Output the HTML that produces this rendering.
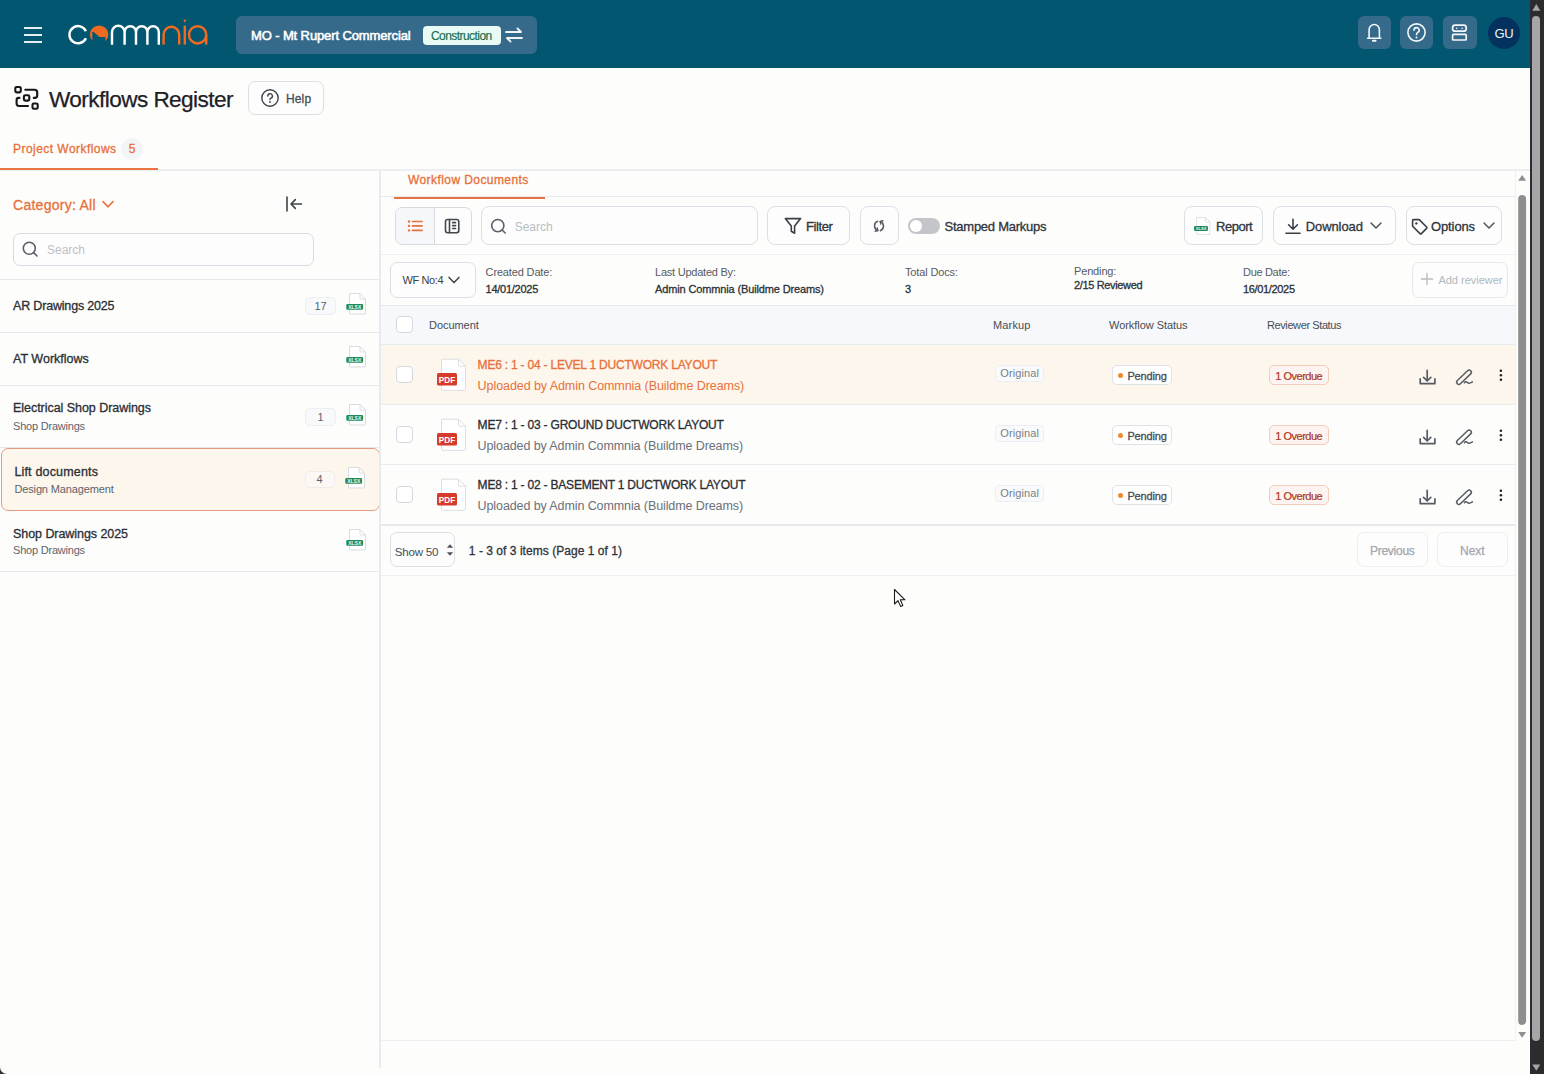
<!DOCTYPE html><html><head><meta charset="utf-8">
<style>
*{box-sizing:border-box;margin:0;padding:0}
html,body{width:1544px;height:1074px;overflow:hidden}
body{position:relative;background:#fdfdfb;font-family:"Liberation Sans",sans-serif;color:#2b2f36}
.a{position:absolute}
.t{position:absolute;white-space:nowrap;line-height:1}
.b{font-weight:700}
.sb{-webkit-text-stroke:0.3px currentColor}
.ln{position:absolute;background:#e8eaee}
svg{position:absolute;overflow:visible}
.btn{position:absolute;border:1px solid #dde0e5;border-radius:7px;background:#fdfdfd}
</style></head><body>

<!-- HEADER -->
<div class="a" style="left:0;top:0;width:1530px;height:68px;background:#03566f"></div>
<!-- hamburger -->
<div class="a" style="left:24px;top:27px;width:18px;height:2px;background:#e4eff4"></div>
<div class="a" style="left:24px;top:34px;width:18px;height:2px;background:#e4eff4"></div>
<div class="a" style="left:24px;top:41px;width:18px;height:2px;background:#e4eff4"></div>
<!-- logo -->
<svg style="left:0;top:0" width="220" height="68" viewBox="0 0 220 68">
  <g fill="none" stroke-width="2.45" stroke-linecap="butt">
    <path d="M85.9 31.2 A8.6 8.6 0 1 0 85.9 38.2" stroke="#fff" stroke-width="2.45"></path>
    <path d="M112 44.8 V32 A6.3 6.3 0 0 1 124.6 32 V44.8 M124.6 32 A5.7 5.7 0 0 1 136 32 V44.8 M136 32 A5.7 5.7 0 0 1 147.4 32 V44.8 M147.4 32 A5.7 5.7 0 0 1 158.8 32 V44.8" stroke="#fff"></path>
    <path d="M163.6 44.6 V34.6 A7.8 7.8 0 0 1 179.2 34.6 V44.6" stroke="#f26a21"></path>
    <path d="M184.8 25.6 V44.6" stroke="#f26a21"></path>
    <circle cx="197.6" cy="34.8" r="8.6" stroke="#f26a21"></circle>
    <path d="M206.2 34.8 V44.6" stroke="#f26a21"></path>
  </g>
  <circle cx="184.8" cy="20.8" r="1.2" fill="#f26a21"></circle>
  <circle cx="99.1" cy="34.6" r="9.2" fill="#f26a21"></circle>
  <path d="M92.3 45 V32.4 Q92.6 31.3 93.6 32 L99.1 36.5 Q99.7 37.1 100.5 37.1 H105.4 V45 Z" fill="#03566f"></path>
</svg>

<!-- project chip -->
<div class="a" style="left:236px;top:16px;width:301px;height:38px;border-radius:6px;background:#366a8b"></div>
<div class="t sb" style="left: 251px; top: 29px; font-size: 13px; color: rgb(255, 255, 255); letter-spacing: -0.117px; -webkit-text-stroke: 0.55px rgb(255, 255, 255);">MO - Mt Rupert Commercial</div>
<div class="a" style="left:423px;top:26px;width:78px;height:19px;border-radius:4px;background:#e8faf3"></div>
<div class="t" style="left: 431px; top: 30px; font-size: 12px; color: rgb(26, 112, 84); letter-spacing: -0.56px; -webkit-text-stroke: 0.2px rgb(26, 112, 84);">Construction</div>
<svg style="left:503px;top:26px" width="22" height="18" viewBox="0 0 22 18">
  <g fill="none" stroke="#f0f6f8" stroke-width="1.8" stroke-linecap="round" stroke-linejoin="round">
    <path d="M3 6 H18 M14.5 2.5 L18 6"></path><path d="M19 12 H4 M7.5 15.5 L4 12"></path>
  </g>
</svg>

<!-- right header icons -->
<div class="a" style="left:1358px;top:16px;width:33px;height:33px;border-radius:6px;background:#366a8b"></div>
<div class="a" style="left:1400px;top:16px;width:33px;height:33px;border-radius:6px;background:#366a8b"></div>
<div class="a" style="left:1443px;top:16px;width:34px;height:33px;border-radius:6px;background:#366a8b"></div>
<svg style="left:1358px;top:16px" width="33" height="33" viewBox="0 0 33 33">
  <g fill="none" stroke="#f3f7f9" stroke-width="1.6" stroke-linecap="round" stroke-linejoin="round">
    <path d="M9.6 22.2 H22.8 M11.1 22.2 V13.6 A5.15 5.15 0 0 1 21.4 13.6 V22.2"></path><path d="M14.9 24.8 H17.6" stroke-width="1.9"></path><circle cx="16.25" cy="8.4" r="0.7" fill="#f3f7f9" stroke="none"></circle>
  </g>
</svg>
<svg style="left:1400px;top:16px" width="33" height="33" viewBox="0 0 33 33">
  <g fill="none" stroke="#f3f7f9" stroke-width="1.6" stroke-linecap="round">
    <circle cx="16.5" cy="16.5" r="8.6"></circle><path d="M14 14.2 A2.6 2.6 0 1 1 17.6 16.6 C16.8 17 16.5 17.6 16.5 18.6"></path>
  </g>
  <circle cx="16.5" cy="21.6" r="1" fill="#f3f7f9"></circle>
</svg>
<svg style="left:1443px;top:16px" width="34" height="33" viewBox="0 0 34 33">
  <g fill="none" stroke="#f3f7f9" stroke-width="1.7">
    <rect x="9.6" y="9.2" width="13.6" height="6" rx="2.5"></rect><rect x="9.6" y="18.4" width="13.6" height="5.6" rx="0.8"></rect>
  </g>
  <circle cx="13.7" cy="12.2" r="0.8" fill="#f3f7f9"></circle><circle cx="19.2" cy="12.2" r="0.8" fill="#f3f7f9"></circle>
</svg>
<div class="a" style="left:1488px;top:17px;width:32px;height:32px;border-radius:50%;background:#03325f"></div>
<div class="t" style="left:1494px;top:27px;font-size:13px;color:#eef5f4;width:20px;text-align:center;letter-spacing:-0.3px">GU</div>

<!-- outer scrollbar -->
<div class="a" style="left:1530px;top:0;width:14px;height:1074px;background:#2c2c2e"></div>
<div class="a" style="left:1532px;top:16px;width:8px;height:1025px;border-radius:4px;background:#a6a6a9"></div>
<svg style="left:1530px;top:0" width="14" height="1074" viewBox="0 0 14 1074">
  <path d="M2.3 10.8 L6.3 4.1 L10.3 10.8Z" fill="#a6a6a9"></path>
  <path d="M2.3 1064.6 L6.3 1070.8 L10.3 1064.6Z" fill="#a6a6a9"></path>
</svg>

<!-- PAGE TITLE -->
<svg style="left:8px;top:80px" width="40" height="40" viewBox="0 0 40 40">
  <g fill="none" stroke="#15171b" stroke-width="2.1" stroke-linecap="round" stroke-linejoin="round">
    <rect x="7.3" y="7" width="5.5" height="5.4" rx="1.3"></rect>
    <rect x="15.9" y="15.2" width="5.4" height="5.4" rx="1.3"></rect>
    <rect x="24.5" y="23.5" width="5.2" height="5.3" rx="1.3"></rect>
    <path d="M17.3 9.8 H26.5 Q29.2 9.8 29.2 12.5 V15.5 Q29.2 17.9 26.8 17.9 H25.8"></path>
    <path d="M11.5 17.9 H10.8 Q8.6 17.9 8.6 20.1 V23.6 Q8.6 26 11 26 H20"></path>
  </g>
</svg>
<div class="t" style="left: 49px; top: 89.2px; font-size: 22.6px; color: rgb(29, 32, 37); letter-spacing: -0.568px; -webkit-text-stroke: 0.25px rgb(29, 32, 37);">Workflows Register</div>
<div class="btn" style="left:248px;top:81px;width:76px;height:34px;border-color:#dcdfe4;border-radius:7px"></div>
<svg style="left:260px;top:88px" width="20" height="20" viewBox="0 0 20 20">
  <g fill="none" stroke="#3e434a" stroke-width="1.4" stroke-linecap="round">
    <circle cx="10" cy="10" r="8.2"></circle><path d="M7.8 8 A2.3 2.3 0 1 1 11 10.1 C10.3 10.4 10 10.9 10 11.6"></path>
  </g>
  <circle cx="10" cy="14" r="0.9" fill="#3e434a"></circle>
</svg>
<div class="t sb" style="left: 286px; top: 92.8px; font-size: 12px; color: rgb(71, 76, 85); letter-spacing: 0.133px;">Help</div>

<!-- Tabs -->
<div class="t sb" style="left: 13px; top: 142.8px; font-size: 12px; color: rgb(232, 112, 58); letter-spacing: 0.457px;">Project Workflows</div>
<div class="a" style="left:121px;top:137.5px;width:22px;height:22px;border-radius:50%;background:#f3f4f7"></div>
<div class="t sb" style="left:121px;top:142.8px;width:22px;text-align:center;font-size:12px;color:#e8703a">5</div>
<div class="ln" style="left:0;top:169px;width:1530px;height:2px;background:#eceef1"></div>
<div class="a" style="left:0;top:168px;width:158px;height:2px;background:#ea7440"></div>

<!-- LEFT PANEL -->
<div class="t sb" style="left: 13px; top: 197.5px; font-size: 14px; color: rgb(232, 112, 58); letter-spacing: 0.267px;">Category: All</div>
<svg style="left:100px;top:198px" width="16" height="12" viewBox="0 0 16 12">
  <path d="M3 3.6 L8 8.8 L13 3.6" fill="none" stroke="#e8703a" stroke-width="1.6" stroke-linecap="round" stroke-linejoin="round"></path>
</svg>
<svg style="left:284px;top:194px" width="20" height="20" viewBox="0 0 20 20">
  <g fill="none" stroke="#3e434a" stroke-width="1.6" stroke-linecap="round" stroke-linejoin="round">
    <path d="M3 3 V17"></path><path d="M17.5 10 H7 M11.3 5.6 L7 10 L11.3 14.4"></path>
  </g>
</svg>
<div class="btn" style="left:13px;top:232.5px;width:301px;height:33.5px;border-color:#d8dbe0;border-radius:7px;background:#fdfdfd"></div>
<svg style="left:20px;top:239px" width="20" height="20" viewBox="0 0 20 20">
  <g fill="none" stroke="#5a6069" stroke-width="1.6" stroke-linecap="round"><circle cx="9.3" cy="9.3" r="6"></circle><path d="M13.6 13.6 L17 17"></path></g>
</svg>
<div class="t" style="left:47px;top:244px;font-size:12px;color:#bdc1c7">Search</div>
<div class="ln" style="left:0;top:278.5px;width:380px;height:1.2px;background:#e6e8ec"></div>


<svg width="0" height="0" style="position:absolute">
  <defs>
    <symbol id="xlsx" viewBox="0 0 22 22">
      <path d="M4.5 0.5 H15 L20.5 6 V20 Q20.5 21 19.5 21 H5.5 Q4.5 21 4.5 20Z" fill="#fff" stroke="#d9dbe0" stroke-width="1"></path>
      <path d="M15 0.5 V5 Q15 6 16 6 H20.5" fill="none" stroke="#d9dbe0" stroke-width="1"></path>
      <rect x="1.3" y="11" width="16.8" height="5.8" rx="1.2" fill="#1f8c5c"></rect>
      <text x="9.7" y="15.6" font-family="Liberation Sans" font-size="5" font-weight="700" fill="#e9f6ef" text-anchor="middle">XLSX</text>
    </symbol>
    <symbol id="pdf" viewBox="0 0 32 34">
      <path d="M5.5 1.2 H22.5 L29.5 8.2 V30.8 Q29.5 32.3 28 32.3 H7 Q5.5 32.3 5.5 30.8Z" fill="#fff" stroke="#dcdee3" stroke-width="1"></path>
      <path d="M22.5 1.2 V6.7 Q22.5 8.2 24 8.2 H29.5" fill="none" stroke="#dcdee3" stroke-width="1"></path>
      <rect x="1" y="15" width="20" height="12.5" rx="1.5" fill="#d63a2a"></rect>
      <text x="11" y="24.6" font-family="Liberation Sans" font-size="8.2" font-weight="700" fill="#fff" text-anchor="middle">PDF</text>
    </symbol>
  </defs>
</svg>
<div class="ln" style="left:0;top:332px;width:380px;height:1.2px;background:#e6e8ec"></div>
<div class="ln" style="left:0;top:385px;width:380px;height:1.2px;background:#e6e8ec"></div>
<div class="ln" style="left:0;top:447px;width:380px;height:1.2px;background:#e6e8ec"></div>
<div class="ln" style="left:0;top:571.2px;width:380px;height:1.2px;background:#e6e8ec"></div>
<div class="a" style="left:0.5px;top:448px;width:379.5px;height:62.5px;border:1.5px solid #e29d80;border-radius:7px;background:#fdf6ec"></div>

<div class="t sb" style="left: 13px; top: 300px; font-size: 12.5px; color: rgb(42, 46, 53); letter-spacing: -0.177px;">AR Drawings 2025</div>
<div class="a" style="left:305px;top:297px;width:31px;height:18px;border:1px solid #eceef2;border-radius:5px;background:#f8f9fb"></div>
<div class="t" style="left:305px;top:301px;width:31px;text-align:center;font-size:11px;color:#5d636b">17</div>
<svg style="left:344.5px;top:293px" width="22" height="22"><use href="#xlsx"></use></svg>

<div class="t sb" style="left: 13px; top: 353.3px; font-size: 12.5px; color: rgb(42, 46, 53); letter-spacing: 0.012px;">AT Workflows</div>
<svg style="left:344.5px;top:346px" width="22" height="22"><use href="#xlsx"></use></svg>

<div class="t sb" style="left: 13px; top: 402.2px; font-size: 12.5px; color: rgb(42, 46, 53); letter-spacing: -0.04px;">Electrical Shop Drawings</div>
<div class="t" style="left:13px;top:421px;font-size:11px;color:#5d636b;letter-spacing:-0.21px">Shop Drawings</div>
<div class="a" style="left:305px;top:407.5px;width:31px;height:18px;border:1px solid #eceef2;border-radius:5px;background:#f8f9fb"></div>
<div class="t" style="left:305px;top:411.5px;width:31px;text-align:center;font-size:11px;color:#5d636b">1</div>
<svg style="left:344.5px;top:403.5px" width="22" height="22"><use href="#xlsx"></use></svg>

<div class="t sb" style="left: 14.4px; top: 465.5px; font-size: 12.5px; color: rgb(42, 46, 53); letter-spacing: 0.176px;">Lift documents</div>
<div class="t" style="left:14.4px;top:483.9px;font-size:11px;color:#5d636b;letter-spacing:-0.13px">Design Management</div>
<div class="a" style="left:304.5px;top:470.5px;width:30px;height:17px;border:1px solid #f0ece9;border-radius:5px;background:#fbf8f6"></div>
<div class="t" style="left:304.5px;top:474px;width:30px;text-align:center;font-size:11px;color:#5d636b">4</div>
<svg style="left:344.3px;top:466.5px" width="22" height="22"><use href="#xlsx"></use></svg>

<div class="t sb" style="left: 13px; top: 527.7px; font-size: 12.5px; color: rgb(42, 46, 53); letter-spacing: -0.058px;">Shop Drawings 2025</div>
<div class="t" style="left:13px;top:545.4px;font-size:11px;color:#5d636b;letter-spacing:-0.21px">Shop Drawings</div>
<svg style="left:345px;top:528.5px" width="22" height="22"><use href="#xlsx"></use></svg>


<!-- RIGHT PANEL FRAME -->
<div class="ln" style="left:379.3px;top:171px;width:2.2px;height:897px;background:#e9eaee;border-radius:1px"></div>


<!-- RIGHT PANEL -->
<div class="t sb" style="left: 408px; top: 173.6px; font-size: 12px; color: rgb(232, 112, 58); letter-spacing: 0.418px;">Workflow Documents</div>
<div class="ln" style="left:381px;top:196px;width:1134.5px;height:1.2px;background:#e8eaee"></div>
<div class="a" style="left:394px;top:196.6px;width:151px;height:2.4px;background:#e47445"></div>

<!-- view toggle -->
<div class="btn" style="left:395px;top:207px;width:76.5px;height:37.5px;border-color:#d6d9de;border-radius:7px;overflow:hidden">
  <div class="a" style="left:0;top:0;width:38px;height:36px;background:#f6f7fa"></div>
  <div class="a" style="left:38px;top:0;width:1.2px;height:36px;background:#d6d9de"></div>
</div>
<svg style="left:405px;top:216px" width="20" height="20" viewBox="0 0 20 20">
  <g stroke="#e8703a" stroke-width="1.7" stroke-linecap="round"><path d="M7.5 5.5 H17 M7.5 9.9 H17 M7.5 14.4 H17"></path></g>
  <g fill="#e8703a"><circle cx="4" cy="5.5" r="1.2"></circle><circle cx="4" cy="9.9" r="1.2"></circle><circle cx="4" cy="14.4" r="1.2"></circle></g>
</svg>
<svg style="left:442px;top:216px" width="20" height="20" viewBox="0 0 20 20">
  <g fill="none" stroke="#43474e" stroke-width="1.6" stroke-linecap="round" stroke-linejoin="round">
    <rect x="3.5" y="3.5" width="13.3" height="13.3" rx="2.2"></rect><path d="M7.5 3.5 V16.8"></path><path d="M10.6 6.6 H13.6 M10.6 9.6 H13.6 M10.6 12.5 H13.6"></path>
  </g>
</svg>

<!-- search -->
<div class="btn" style="left:481.3px;top:206.2px;width:276.3px;height:39px;border-color:#dcdfe4;border-radius:8px"></div>
<svg style="left:488px;top:216px" width="20" height="20" viewBox="0 0 20 20">
  <g fill="none" stroke="#5a6069" stroke-width="1.6" stroke-linecap="round"><circle cx="9.8" cy="9.6" r="6.1"></circle><path d="M14.2 14 L17.2 17"></path></g>
</svg>
<div class="t" style="left:514.7px;top:220.6px;font-size:12px;color:#b9bdc4">Search</div>

<!-- filter -->
<div class="btn" style="left:767.4px;top:206.2px;width:83px;height:39px;border-color:#dcdfe4;border-radius:8px"></div>
<svg style="left:782px;top:216px" width="22" height="20" viewBox="0 0 22 20">
  <path d="M3.3 2.6 H18.6 L12.6 10 V17.2 L9.3 15.3 V10Z" fill="none" stroke="#3a3e45" stroke-width="1.6" stroke-linejoin="round"></path>
</svg>
<div class="t sb" style="left: 806px; top: 220px; font-size: 13px; color: rgb(48, 52, 59); letter-spacing: -0.42px;">Filter</div>

<!-- refresh -->
<div class="btn" style="left:860px;top:206.2px;width:39.3px;height:39px;border-color:#dcdfe4;border-radius:8px"></div>
<svg style="left:869px;top:215.5px" width="20" height="20" viewBox="0 0 20 20">
  <g fill="none" stroke="#575c64" stroke-width="1.5" stroke-linecap="round" stroke-linejoin="round">
    <path d="M8.6 5.3 A5 5 0 0 0 8.8 14.6"></path><path d="M6.2 15.2 L8.8 14.6 L8.2 12"></path>
    <path d="M11.4 14.7 A5 5 0 0 0 11.2 5.4"></path><path d="M13.8 4.8 L11.2 5.4 L11.8 8"></path>
  </g>
</svg>

<!-- toggle -->
<div class="a" style="left:908.2px;top:218px;width:31.5px;height:15.6px;border-radius:8px;background:#c4c5c9"></div>
<div class="a" style="left:909.7px;top:219.5px;width:12.6px;height:12.6px;border-radius:50%;background:#fff"></div>
<div class="t sb" style="left: 944.6px; top: 220px; font-size: 13px; color: rgb(48, 52, 59); letter-spacing: -0.261px;">Stamped Markups</div>

<!-- report -->
<div class="btn" style="left:1184.3px;top:206.2px;width:79.2px;height:39px;border-color:#dcdfe4;border-radius:8px"></div>
<svg style="left:1193px;top:216.6px" width="18.2" height="18.2" viewBox="0 0 22 22"><use href="#xlsx"></use></svg>
<div class="t sb" style="left: 1216px; top: 220px; font-size: 13px; color: rgb(48, 52, 59); letter-spacing: -0.48px;">Report</div>

<!-- download -->
<div class="btn" style="left:1272.5px;top:206.2px;width:123.4px;height:39px;border-color:#dcdfe4;border-radius:8px"></div>
<svg style="left:1283px;top:216px" width="20" height="20" viewBox="0 0 20 20">
  <g fill="none" stroke="#3a3e45" stroke-width="1.6" stroke-linecap="round" stroke-linejoin="round">
    <path d="M10 3.2 V13 M5.6 8.8 L10 13.2 L14.4 8.8"></path><path d="M3 17.2 H17"></path>
  </g>
</svg>
<div class="t sb" style="left: 1305.7px; top: 220px; font-size: 13px; color: rgb(48, 52, 59); letter-spacing: -0.086px;">Download</div>
<svg style="left:1368px;top:218px" width="16" height="14" viewBox="0 0 16 14">
  <path d="M3 5 L8 10 L13 5" fill="none" stroke="#50555c" stroke-width="1.5" stroke-linecap="round" stroke-linejoin="round"></path>
</svg>

<!-- options -->
<div class="btn" style="left:1405.5px;top:206.2px;width:96.8px;height:39px;border-color:#dcdfe4;border-radius:8px"></div>
<svg style="left:1410px;top:216.5px" width="20" height="20" viewBox="0 0 20 20">
  <g fill="none" stroke="#3a3e45" stroke-width="1.6" stroke-linejoin="round">
    <path d="M2.6 3.6 Q2.6 2.6 3.6 2.6 H9.2 L16.6 10 Q17.3 10.7 16.6 11.4 L11.4 16.6 Q10.7 17.3 10 16.6 L2.6 9.2Z"></path>
  </g>
  <circle cx="6.4" cy="6.4" r="1.2" fill="#3a3e45"></circle>
</svg>
<div class="t sb" style="left: 1431px; top: 220px; font-size: 13px; color: rgb(48, 52, 59); letter-spacing: -0.113px;">Options</div>
<svg style="left:1480.5px;top:218px" width="16" height="14" viewBox="0 0 16 14">
  <path d="M3 5 L8 10 L13 5" fill="none" stroke="#50555c" stroke-width="1.5" stroke-linecap="round" stroke-linejoin="round"></path>
</svg>

<div class="ln" style="left:381px;top:253.5px;width:1134.5px;height:1.2px;background:#eceef1"></div>

<!-- meta row -->
<div class="btn" style="left:389.6px;top:262px;width:86.7px;height:35.5px;border-color:#dcdfe4;border-radius:7px"></div>
<div class="t" style="left:402.4px;top:275px;font-size:11px;color:#3b3f46;letter-spacing:-0.35px">WF No:4</div>
<svg style="left:446px;top:273px" width="16" height="14" viewBox="0 0 16 14">
  <path d="M3 4.4 L8 9.6 L13 4.4" fill="none" stroke="#43474e" stroke-width="1.5" stroke-linecap="round" stroke-linejoin="round"></path>
</svg>

<div class="t" style="left:485.6px;top:266.7px;font-size:11px;color:#555a62;letter-spacing:-0.15px">Created Date:</div>
<div class="t sb" style="left: 485.6px; top: 283.7px; font-size: 11px; color: rgb(44, 48, 55); letter-spacing: -0.261px;">14/01/2025</div>
<div class="t" style="left: 655px; top: 266.7px; font-size: 11px; color: rgb(85, 90, 98); letter-spacing: -0.23px;">Last Updated By:</div>
<div class="t sb" style="left: 655px; top: 283.7px; font-size: 11px; color: rgb(44, 48, 55); letter-spacing: -0.138px;">Admin Commnia (Buildme Dreams)</div>
<div class="t" style="left:905px;top:266.7px;font-size:11px;color:#555a62;letter-spacing:-0.15px">Total Docs:</div>
<div class="t sb" style="left:905px;top:283.7px;font-size:11px;color:#2c3037">3</div>
<div class="t" style="left:1074px;top:265.5px;font-size:11px;color:#555a62;letter-spacing:-0.15px">Pending:</div>
<div class="t sb" style="left: 1074px; top: 279.7px; font-size: 11px; color: rgb(44, 48, 55); letter-spacing: -0.35px;">2/15 Reviewed</div>
<div class="t" style="left: 1243px; top: 266.7px; font-size: 11px; color: rgb(85, 90, 98); letter-spacing: -0.312px;">Due Date:</div>
<div class="t sb" style="left: 1243px; top: 283.7px; font-size: 11px; color: rgb(44, 48, 55); letter-spacing: -0.339px;">16/01/2025</div>

<div class="btn" style="left:1412.3px;top:262.2px;width:95.3px;height:35.4px;border-color:#e6e8ec;border-radius:7px"></div>
<svg style="left:1420px;top:272px" width="14" height="14" viewBox="0 0 14 14">
  <path d="M7 1.5 V12.6 M1.5 7 H12.6" stroke="#b7bac1" stroke-width="1.3" stroke-linecap="round"></path>
</svg>
<div class="t" style="left: 1438.4px; top: 275.3px; font-size: 11px; color: rgb(179, 183, 190); letter-spacing: -0.009px;">Add reviewer</div>

<div class="ln" style="left:381px;top:304.5px;width:1134.5px;height:1.2px;background:#e6e9ee"></div>

<!-- table header -->
<div class="a" style="left:381px;top:305.7px;width:1134.5px;height:38.3px;background:#f6f8fb"></div>
<div class="ln" style="left:381px;top:343.5px;width:1134.5px;height:1.2px;background:#e6e9ee"></div>
<div class="a" style="left:395.5px;top:316px;width:17px;height:17.3px;border:1px solid #d5d8dd;border-radius:4px;background:#fff"></div>
<div class="t" style="left:429px;top:319.5px;font-size:11px;color:#474c54;letter-spacing:-0.05px">Document</div>
<div class="t" style="left: 993px; top: 319.5px; font-size: 11px; color: rgb(71, 76, 84); letter-spacing: 0.15px;">Markup</div>
<div class="t" style="left:1109px;top:319.5px;font-size:11px;color:#474c54;letter-spacing:-0.05px">Workflow Status</div>
<div class="t" style="left: 1267px; top: 319.5px; font-size: 11px; color: rgb(71, 76, 84); letter-spacing: -0.4px;">Reviewer Status</div>

<div class="a" style="left:381px;top:344.7px;width:1134.5px;height:59.3px;background:#fdf6ec"></div>
<div class="ln" style="left:381px;top:403.5px;width:1134.5px;height:1.2px;background:#e9ebef"></div>
<div class="a" style="left:395.5px;top:366px;width:17px;height:17.3px;border:1px solid #d5d8dd;border-radius:4px;background:#fff"></div>
<svg style="left:436px;top:358px" width="32" height="34" viewBox="0 0 32 34"><use href="#pdf"></use></svg>
<div class="t sb" style="left: 477.6px; top: 358.5px; font-size: 12px; color: rgb(232, 112, 58); letter-spacing: -0.208px;">ME6 : 1 - 04 - LEVEL 1 DUCTWORK LAYOUT</div>
<div class="t" style="left: 477.6px; top: 380px; font-size: 12.5px; color: rgb(232, 112, 58); letter-spacing: -0.071px;">Uploaded by Admin Commnia (Buildme Dreams)</div>
<div class="a" style="left:995.2px;top:364.5px;width:49px;height:17px;border-radius:4px;background:#f9fafb;border:1px solid #eceef1"></div>
<div class="t" style="left: 995.2px; top: 368.3px; width: 49px; text-align: center; font-size: 11px; color: rgb(122, 127, 135); letter-spacing: 0.114px;">Original</div>
<div class="a" style="left:1111.7px;top:365.2px;width:60.7px;height:20.2px;border-radius:5px;background:#fff;border:1px solid #dfe2e7"></div>
<div class="a" style="left:1118px;top:372.8px;width:5px;height:5px;border-radius:50%;background:#ef8a2e"></div>
<div class="t sb" style="left: 1127.4px; top: 371.0px; font-size: 11px; color: rgb(72, 77, 85); letter-spacing: -0.167px;">Pending</div>
<div class="a" style="left:1269px;top:365.2px;width:59.6px;height:20.2px;border-radius:5px;background:#fdf3f1;border:1px solid #f3cdbb"></div>
<div class="t" style="left: 1269px; top: 371.0px; width: 59.6px; text-align: center; font-size: 11px; color: rgb(170, 56, 34); letter-spacing: -0.5px; -webkit-text-stroke: 0.2px rgb(170, 56, 34);">1 Overdue</div>
<svg style="left:1417px;top:368px" width="20" height="18" viewBox="0 0 20 18">
  <g fill="none" stroke="#565c64" stroke-width="1.7" stroke-linecap="round" stroke-linejoin="round"><path d="M10.2 2.4 V12.6 M6.6 9.4 L10.2 13 L13.8 9.4"></path><path d="M3.2 10.8 V15.6 H17.9 V10.8"></path></g>
</svg>
<svg style="left:1454px;top:368px" width="20" height="18" viewBox="0 0 20 18">
  <g fill="none" stroke="#565c64" stroke-width="1.5" stroke-linecap="round" stroke-linejoin="round"><rect x="-9.3" y="-2.2" width="18.6" height="4.4" rx="2.2" transform="translate(10 9.2) rotate(-44)"></rect><path d="M10.4 14.8 Q11.9 13 13.4 14.5 Q15 16.1 18.4 13.8"></path></g>
</svg>
<svg style="left:1496px;top:368px" width="10" height="18" viewBox="0 0 10 18">
  <g fill="#1e2126"><circle cx="4.9" cy="2.7" r="1.25"></circle><circle cx="4.9" cy="7.2" r="1.25"></circle><circle cx="4.9" cy="11.7" r="1.25"></circle></g>
</svg>
<div class="ln" style="left:381px;top:463.5px;width:1134.5px;height:1.2px;background:#e9ebef"></div>
<div class="a" style="left:395.5px;top:426px;width:17px;height:17.3px;border:1px solid #d5d8dd;border-radius:4px;background:#fff"></div>
<svg style="left:436px;top:418px" width="32" height="34" viewBox="0 0 32 34"><use href="#pdf"></use></svg>
<div class="t sb" style="left:477.6px;top:418.5px;font-size:12px;color:#2a2e35;letter-spacing:-0.208px">ME7 : 1 - 03 - GROUND DUCTWORK LAYOUT</div>
<div class="t" style="left:477.6px;top:440.0px;font-size:12.5px;color:#6b7079;letter-spacing:-0.1px">Uploaded by Admin Commnia (Buildme Dreams)</div>
<div class="a" style="left:995.2px;top:424.5px;width:49px;height:17px;border-radius:4px;background:#f9fafb;border:1px solid #eceef1"></div>
<div class="t" style="left: 995.2px; top: 428.3px; width: 49px; text-align: center; font-size: 11px; color: rgb(122, 127, 135); letter-spacing: 0.114px;">Original</div>
<div class="a" style="left:1111.7px;top:425.2px;width:60.7px;height:20.2px;border-radius:5px;background:#fff;border:1px solid #dfe2e7"></div>
<div class="a" style="left:1118px;top:432.8px;width:5px;height:5px;border-radius:50%;background:#ef8a2e"></div>
<div class="t sb" style="left: 1127.4px; top: 431.0px; font-size: 11px; color: rgb(72, 77, 85); letter-spacing: -0.167px;">Pending</div>
<div class="a" style="left:1269px;top:425.2px;width:59.6px;height:20.2px;border-radius:5px;background:#fdf3f1;border:1px solid #f3cdbb"></div>
<div class="t" style="left: 1269px; top: 431.0px; width: 59.6px; text-align: center; font-size: 11px; color: rgb(170, 56, 34); letter-spacing: -0.5px; -webkit-text-stroke: 0.2px rgb(170, 56, 34);">1 Overdue</div>
<svg style="left:1417px;top:428px" width="20" height="18" viewBox="0 0 20 18">
  <g fill="none" stroke="#565c64" stroke-width="1.7" stroke-linecap="round" stroke-linejoin="round"><path d="M10.2 2.4 V12.6 M6.6 9.4 L10.2 13 L13.8 9.4"></path><path d="M3.2 10.8 V15.6 H17.9 V10.8"></path></g>
</svg>
<svg style="left:1454px;top:428px" width="20" height="18" viewBox="0 0 20 18">
  <g fill="none" stroke="#565c64" stroke-width="1.5" stroke-linecap="round" stroke-linejoin="round"><rect x="-9.3" y="-2.2" width="18.6" height="4.4" rx="2.2" transform="translate(10 9.2) rotate(-44)"></rect><path d="M10.4 14.8 Q11.9 13 13.4 14.5 Q15 16.1 18.4 13.8"></path></g>
</svg>
<svg style="left:1496px;top:428px" width="10" height="18" viewBox="0 0 10 18">
  <g fill="#1e2126"><circle cx="4.9" cy="2.7" r="1.25"></circle><circle cx="4.9" cy="7.2" r="1.25"></circle><circle cx="4.9" cy="11.7" r="1.25"></circle></g>
</svg>
<div class="ln" style="left:381px;top:523.5px;width:1134.5px;height:1.2px;background:#e9ebef"></div>
<div class="a" style="left:395.5px;top:486px;width:17px;height:17.3px;border:1px solid #d5d8dd;border-radius:4px;background:#fff"></div>
<svg style="left:436px;top:478px" width="32" height="34" viewBox="0 0 32 34"><use href="#pdf"></use></svg>
<div class="t sb" style="left:477.6px;top:478.5px;font-size:12px;color:#2a2e35;letter-spacing:-0.208px">ME8 : 1 - 02 - BASEMENT 1 DUCTWORK LAYOUT</div>
<div class="t" style="left:477.6px;top:500.0px;font-size:12.5px;color:#6b7079;letter-spacing:-0.1px">Uploaded by Admin Commnia (Buildme Dreams)</div>
<div class="a" style="left:995.2px;top:484.5px;width:49px;height:17px;border-radius:4px;background:#f9fafb;border:1px solid #eceef1"></div>
<div class="t" style="left: 995.2px; top: 488.3px; width: 49px; text-align: center; font-size: 11px; color: rgb(122, 127, 135); letter-spacing: 0.114px;">Original</div>
<div class="a" style="left:1111.7px;top:485.2px;width:60.7px;height:20.2px;border-radius:5px;background:#fff;border:1px solid #dfe2e7"></div>
<div class="a" style="left:1118px;top:492.8px;width:5px;height:5px;border-radius:50%;background:#ef8a2e"></div>
<div class="t sb" style="left: 1127.4px; top: 491.0px; font-size: 11px; color: rgb(72, 77, 85); letter-spacing: -0.167px;">Pending</div>
<div class="a" style="left:1269px;top:485.2px;width:59.6px;height:20.2px;border-radius:5px;background:#fdf3f1;border:1px solid #f3cdbb"></div>
<div class="t" style="left: 1269px; top: 491.0px; width: 59.6px; text-align: center; font-size: 11px; color: rgb(170, 56, 34); letter-spacing: -0.5px; -webkit-text-stroke: 0.2px rgb(170, 56, 34);">1 Overdue</div>
<svg style="left:1417px;top:488px" width="20" height="18" viewBox="0 0 20 18">
  <g fill="none" stroke="#565c64" stroke-width="1.7" stroke-linecap="round" stroke-linejoin="round"><path d="M10.2 2.4 V12.6 M6.6 9.4 L10.2 13 L13.8 9.4"></path><path d="M3.2 10.8 V15.6 H17.9 V10.8"></path></g>
</svg>
<svg style="left:1454px;top:488px" width="20" height="18" viewBox="0 0 20 18">
  <g fill="none" stroke="#565c64" stroke-width="1.5" stroke-linecap="round" stroke-linejoin="round"><rect x="-9.3" y="-2.2" width="18.6" height="4.4" rx="2.2" transform="translate(10 9.2) rotate(-44)"></rect><path d="M10.4 14.8 Q11.9 13 13.4 14.5 Q15 16.1 18.4 13.8"></path></g>
</svg>
<svg style="left:1496px;top:488px" width="10" height="18" viewBox="0 0 10 18">
  <g fill="#1e2126"><circle cx="4.9" cy="2.7" r="1.25"></circle><circle cx="4.9" cy="7.2" r="1.25"></circle><circle cx="4.9" cy="11.7" r="1.25"></circle></g>
</svg>


<!-- pagination -->
<div class="ln" style="left:381px;top:524.3px;width:1134.5px;height:1.6px;background:#e8eaee"></div>
<div class="btn" style="left:389.6px;top:532.3px;width:65px;height:35.2px;border-color:#dcdfe4;border-radius:7px"></div>
<div class="t" style="left: 394.8px; top: 545.5px; font-size: 11.6px; color: rgb(71, 76, 84); letter-spacing: -0.25px;">Show 50</div>
<svg style="left:444px;top:541px" width="12" height="18" viewBox="0 0 12 18">
  <path d="M2.8 6.8 L6 3.3 L9.2 6.8Z M2.8 11.2 L6 14.7 L9.2 11.2Z" fill="#50555c"></path>
</svg>
<div class="t sb" style="left: 468.8px; top: 544.8px; font-size: 12px; color: rgb(48, 52, 59); letter-spacing: 0.038px;">1 - 3 of 3 items (Page 1 of 1)</div>
<div class="btn" style="left:1357px;top:532.3px;width:70.5px;height:35.2px;border-color:#eceef1;border-radius:7px"></div>
<div class="t" style="left:1357px;top:544.8px;width:70.5px;text-align:center;font-size:12px;color:#a3a6ad;letter-spacing:-0.25px;-webkit-text-stroke:0.25px #a3a6ad">Previous</div>
<div class="btn" style="left:1437px;top:532.3px;width:70.5px;height:35.2px;border-color:#eceef1;border-radius:7px"></div>
<div class="t" style="left:1437px;top:544.8px;width:70.5px;text-align:center;font-size:12px;color:#a3a6ad;letter-spacing:-0.1px;-webkit-text-stroke:0.25px #a3a6ad">Next</div>
<div class="ln" style="left:381px;top:574.6px;width:1134.5px;height:1px;background:#eff0f3"></div>

<!-- panel bottom / right edge -->
<div class="ln" style="left:381px;top:1039.5px;width:1134.5px;height:1.2px;background:#eceef1"></div>
<div class="ln" style="left:1515px;top:171px;width:1px;height:869px;background:#f0f1f4"></div>

<!-- inner scrollbar -->
<svg style="left:1516px;top:170px" width="14" height="880" viewBox="0 0 14 880">
  <path d="M2.2 10.7 L6.1 4.9 L10.1 10.7Z" fill="#8e8e90"></path>
  <rect x="2.2" y="24.9" width="7.9" height="830" rx="3.95" fill="#8e8e90"></rect>
  <path d="M2.2 862 L6.1 867.7 L10.1 862Z" fill="#8e8e90"></path>
</svg>

<!-- window corner -->
<svg style="left:0;top:1067px" width="7" height="7" viewBox="0 0 7 7"><path d="M0 0 V7 H7 A7 7 0 0 1 0 0Z" fill="#333335"></path></svg>
<!-- cursor -->
<svg style="left:893px;top:588px" width="16" height="22" viewBox="0 0 16 22">
  <path d="M1.5 1.5 V16 L5 12.6 L7.6 18.4 L9.8 17.4 L7.3 11.8 H12Z" fill="#fff" stroke="#1a1a1a" stroke-width="1.1" stroke-linejoin="round"></path>
</svg>


</body></html>
